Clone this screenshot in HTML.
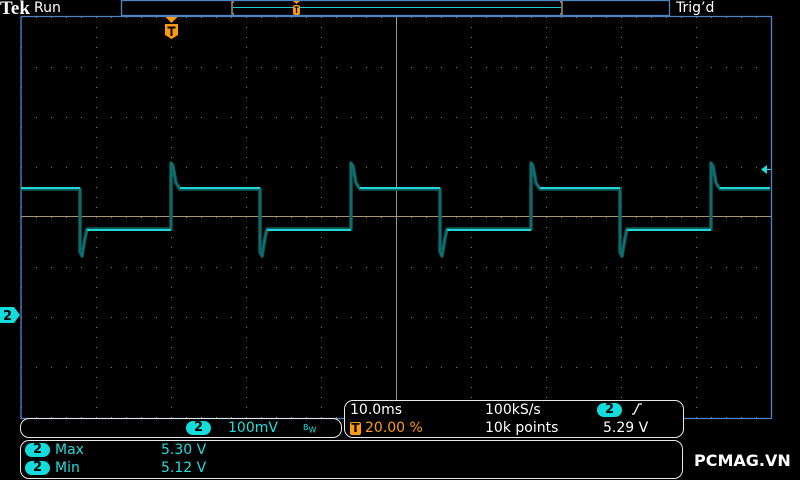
<!DOCTYPE html>
<html><head><meta charset="utf-8"><style>
body{margin:0;background:#000;width:800px;height:480px;overflow:hidden;position:relative;font-family:"DejaVu Sans","Liberation Sans",sans-serif;}
.t{position:absolute;white-space:nowrap;font-size:13px;line-height:14px;}
.w{color:#fff}.c{color:#22dddd}.o{color:#ff9a10}
.pill{position:absolute;background:#12dcdc;color:#000;border-radius:8px;font-weight:bold;font-size:13px;line-height:14px;text-align:center;}
.box{position:absolute;border:1.3px solid #e8e8e8;border-radius:9px;}
</style></head><body>
<svg width="800" height="480" style="position:absolute;left:0;top:0">
<defs>
<pattern id="hr" x="21" y="17" width="15" height="50" patternUnits="userSpaceOnUse"><rect width="1" height="1" fill="#8a7a58"/></pattern>
<pattern id="vc" x="21" y="17" width="75" height="10" patternUnits="userSpaceOnUse"><rect width="1" height="1" fill="#8a7a58"/></pattern>
</defs>
<rect x="21" y="17" width="750" height="401" fill="url(#hr)"/>
<rect x="21" y="17" width="750" height="401" fill="url(#vc)"/>
<line x1="21" y1="216.5" x2="771" y2="216.5" stroke="#a89470" stroke-width="1"/>
<line x1="396.5" y1="17" x2="396.5" y2="418" stroke="#a89470" stroke-width="1"/>
<path d="M21 16.5H771.5V418.5H21V16.5" fill="none" stroke="#4f84c4" stroke-width="1.3"/>
<rect x="121.5" y="0.5" width="548" height="15" fill="none" stroke="#4f84c4" stroke-width="1.3"/>
<path d="M234 2H232V14H234M560 2H562V14H560" fill="none" stroke="#a89470" stroke-width="1.5"/>
<line x1="233" y1="7.5" x2="561" y2="7.5" stroke="#22cccc" stroke-width="1"/>
<path d="M293 1H300L296.5 4Z" fill="#ff9a10"/><rect x="293" y="5" width="7" height="10" rx="2" fill="#ff9a10"/>
<path d="M294.5 7H298.5M296.5 7V13" stroke="#000" stroke-width="1.2"/>
<path d="M165.5 17H177.5L171.5 23Z" fill="#ff9a10"/>
<path d="M165 24H178V35L171.5 39L165 35Z" fill="#ff9a10"/>
<path d="M167.5 27.5H175.5M171.5 27.5V36" stroke="#000" stroke-width="2"/>
<path d="M0 307H14L20 315L14 323H0Z" fill="#12dcdc"/>
<text x="3" y="320" font-family="DejaVu Sans" font-size="13" font-weight="bold" fill="#000">2</text>
<path d="M761 169.5L767 165V174Z" fill="#22dddd"/><line x1="766" y1="169.5" x2="771" y2="169.5" stroke="#22dddd"/>
<path d="M21 189L80 189L80 252L82 256L85 238L87 229L171 229L171 163L173 166L176 183L180 189L260 189L260 252L262 256L265 238L267 229L351 229L351 163L353 166L356 183L360 189L440 189L440 252L442 256L445 238L447 229L531 229L531 163L533 166L536 183L540 189L620 189L620 252L622 256L625 238L627 229L711 229L711 163L713 166L716 183L720 189L770 189" fill="none" stroke="#0b5f60" stroke-width="3.5" stroke-linejoin="round"/>
<path d="M21 188L80 188M87 230L171 230M180 188L260 188M267 230L351 230M360 188L440 188M447 230L531 230M540 188L620 188M627 230L711 230M720 188L770 188" fill="none" stroke="#22d4d4" stroke-width="2"/>
<path d="M80 189L80 252L82 256L85 238L87 229M171 229L171 163L173 166L176 183L180 189M260 189L260 252L262 256L265 238L267 229M351 229L351 163L353 166L356 183L360 189M440 189L440 252L442 256L445 238L447 229M531 229L531 163L533 166L536 183L540 189M620 189L620 252L622 256L625 238L627 229M711 229L711 163L713 166L716 183L720 189" fill="none" stroke="#0e7a7a" stroke-width="1"/>
</svg>
<div class="t w" style="left:0;top:-1px;font-family:'Liberation Serif',serif;font-weight:bold;font-size:19px;line-height:19px">Tek</div>
<div class="t w" style="left:34px;top:0px;font-size:14px;line-height:16px">Run</div>
<div class="t w" style="left:676px;top:0px;font-size:14px;line-height:16px">Trig’d</div>

<div class="box" style="left:20px;top:418px;width:320px;height:18px"></div>
<div class="pill" style="left:186px;top:421px;width:25px">2</div>
<div class="t c" style="left:228px;top:421px;font-size:14px">100mV</div>
<div class="t c" style="left:303px;top:421px;font-size:8px">B<sub style="font-size:8px">W</sub></div>

<div class="box" style="left:344px;top:400px;width:338px;height:36px;background:#000"></div>
<div class="t w" style="left:350px;top:403px;font-size:14px">10.0ms</div>
<div class="t w" style="left:485px;top:403px;font-size:14px">100kS/s</div>
<div class="pill" style="left:597px;top:403px;width:25px">2</div>
<svg style="position:absolute;left:630px;top:402px" width="16" height="14"><path d="M2 12H4L9 2H12" fill="none" stroke="#fff" stroke-width="1.3"/></svg>
<div style="position:absolute;left:350px;top:422px;width:11px;height:13px;background:#ff9a10;border-radius:2px;color:#000;font-weight:bold;font-size:12px;line-height:13px;text-align:center">T</div>
<div class="t o" style="left:365px;top:421px;font-size:14px">20.00 %</div>
<div class="t w" style="left:485px;top:421px;font-size:14px">10k points</div>
<div class="t w" style="left:603px;top:421px;font-size:14px">5.29 V</div>

<div class="box" style="left:20px;top:440px;width:661px;height:37px"></div>
<div class="pill" style="left:25px;top:443px;width:25px">2</div>
<div class="t c" style="left:55px;top:443px;font-size:14px">Max</div>
<div class="t c" style="left:161px;top:443px;font-size:14px">5.30 V</div>
<div class="pill" style="left:25px;top:461px;width:25px">2</div>
<div class="t c" style="left:55px;top:461px;font-size:14px">Min</div>
<div class="t c" style="left:161px;top:461px;font-size:14px">5.12 V</div>
<div class="t w" style="left:694px;top:452px;font-weight:bold;font-size:16px;line-height:18px">PCMAG.VN</div>
</body></html>
